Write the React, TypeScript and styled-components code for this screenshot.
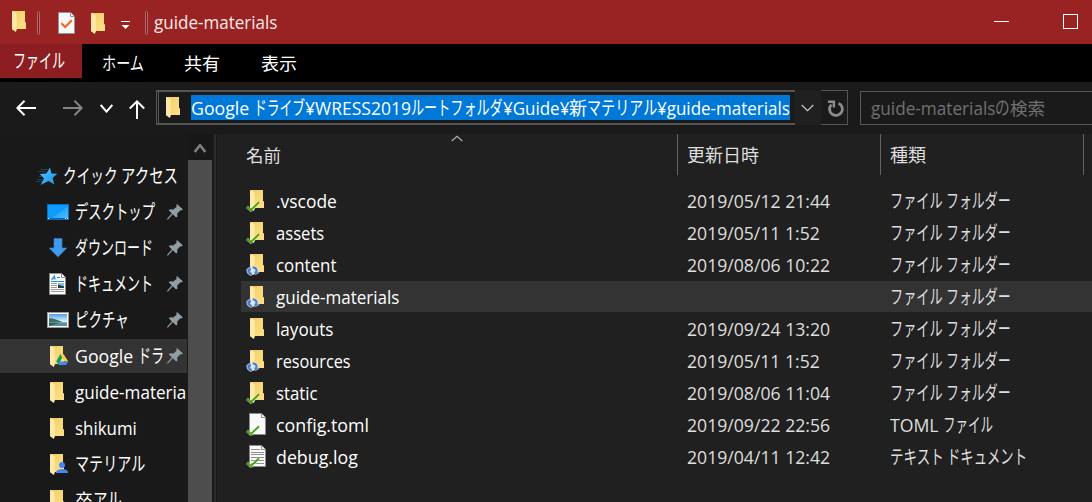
import React, { useLayoutEffect, useRef, useState } from "react";
import styled, { createGlobalStyle } from "styled-components";

const Global = createGlobalStyle`
  * { box-sizing: border-box; }
  html, body { margin: 0; background: #191919; overflow: hidden; }
  body { font-family: "Open Sans", "Noto Sans CJK JP", sans-serif; font-size: 18px; color: #fff; }
  svg { display: block; flex: none; }
`;

/* ---------- text fitted to a column width ---------- */
const RunBox = styled.span<{ $w: number }>`
  display: inline-block;
  width: ${(p) => p.$w}px;
  height: 26px;
  vertical-align: top;
  white-space: pre;
`;
const RunInner = styled.span<{ $size: number }>`
  display: inline-block;
  font-size: ${(p) => p.$size}px;
  line-height: 26px;
  transform-origin: 0 50%;
`;
const kana = /^[\u3041-\u30ff]/;
function Run({ w, size, children }: { w: number; size?: number; children: string }) {
  const ref = useRef<HTMLSpanElement>(null);
  const [k, setK] = useState(1);
  useLayoutEffect(() => {
    if (ref.current) setK(w / ref.current.offsetWidth);
  }, [w, children]);
  return (
    <RunBox $w={w}>
      <RunInner ref={ref} $size={size ?? (kana.test(children) ? 19.5 : 18)} style={{ transform: `scaleX(${k})` }}>{children}</RunInner>
    </RunBox>
  );
}

/* ---------- frame ---------- */
const Window = styled.div`
  width: 1092px; height: 502px; overflow: hidden;
  display: flex; flex-direction: column;
`;
const TitleBar = styled.header`
  height: 44px; background: #992222; flex: none;
  display: flex; align-items: flex-start; padding-left: 12px;
`;
const TitleItem = styled.div<{ $l?: number; $t: number }>`
  margin-left: ${(p) => p.$l ?? 0}px; padding-top: ${(p) => p.$t}px; color: #f6e9e9;
`;
const Spacer = styled.div` flex: 1; `;
const TabStrip = styled.nav`
  height: 38px; background: #000; flex: none; display: flex; align-items: flex-start;
`;
const FileTab = styled.div`
  width: 82px; height: 34px; background: #8c1e21; padding: 4px 0 0 13px;
`;
const Tab = styled.div<{ $l: number }>` margin-left: ${(p) => p.$l}px; padding-top: 6px; `;
const Toolbar = styled.div`
  height: 52px; background: #1a1a1a; flex: none; display: flex; align-items: flex-start;
`;
const NavIcon = styled.div<{ $l: number; $t: number }>`
  margin: ${(p) => p.$t}px 0 0 ${(p) => p.$l}px;
`;
const AddressFrame = styled.div`
  margin: 8px 0 0 11px; height: 35px; width: 639px; flex: none;
  border: solid #555; border-width: 2px 0 2px 1px; padding-left: 1px;
`;
const AddressInput = styled.div`
  height: 31px; border-left: 1px solid #555; display: flex; padding: 3px 0 0 8px;
`;
const Selected = styled.div`
  margin-left: 11px; height: 25px; background: #0078d7; width: 599px; white-space: nowrap;
`;
const DropButton = styled.div`
  width: 26px; height: 35px; margin-top: 8px; background: #202020; padding: 14px 0 0 6px; flex: none;
`;
const RefreshButton = styled.div`
  width: 27px; height: 35px; margin-top: 8px; border: 1px solid #555; border-left: 0; padding: 9px 0 0 6px; flex: none;
`;
const SearchBox = styled.div`
  margin: 9px -2px 0 12px; height: 34px; flex: 1; border: 1px solid #5a5a5a; padding: 3px 0 0 10px; color: #717171; white-space: nowrap;
`;

/* ---------- body ---------- */
const Body = styled.div` flex: 1; display: flex; min-height: 0; `;
const Sidebar = styled.aside`
  width: 188px; background: #191919; padding-top: 24px; flex: none; overflow: hidden;
`;
const SideRow = styled.div<{ $active?: boolean; $inset: number }>`
  height: 36px; width: 187px; display: flex; align-items: center; overflow: hidden;
  padding-left: ${(p) => p.$inset}px;
  background: ${(p) => (p.$active ? "#333" : "transparent")};
  background-clip: padding-box;
  border: solid transparent; border-width: 1px 0;
`;
const SideIcon = styled.div<{ $w: number }>`
  width: ${(p) => p.$w}px; height: 22px; flex: none;
`;
const SideLabel = styled.div` flex: 1; height: 26px; white-space: nowrap; min-width: 0; `;
const PinSlot = styled.div` width: 20px; flex: none; `;
const ScrollTrack = styled.div`
  width: 24px; flex: none; background: #171717; display: flex; flex-direction: column;
`;
const ScrollUp = styled.div` height: 26px; padding: 10px 0 0 6px; `;
const ScrollThumb = styled.div` flex: 1; background: #4d4d4d; `;
const Splitter = styled.div`
  width: 5px; flex: none; background: #2b2b2b; border-left: 2px solid #191919; border-right: 1px solid #191919;
`;
const Pane = styled.main` flex: 1; background: #202020; min-width: 0; `;
const Grid = styled.div`
  display: grid; grid-template-columns: 461px 203px 203px 1fr;
`;
const Header = styled(Grid)` height: 51px; color: #dedede; `;
const HeadCell = styled.div<{ $pad: number }>`
  height: 41px; display: flex; align-items: flex-start; padding: 8px 0 0 ${(p) => p.$pad}px;
  border-right: 1px solid #636363;
`;
const SortMark = styled.div` margin: -7px 0 0 170px; `;
const Row = styled(Grid)<{ $active?: boolean }>`
  height: 32px; margin-left: 24px; grid-template-columns: 446px 203px 1fr;
  border-bottom: 1px solid transparent; background-clip: padding-box;
  background-color: ${(p) => (p.$active ? "#333" : "transparent")};
  padding-top: 3px;
`;
const NameCell = styled.div` display: flex; padding-left: 5px; `;
const FileIcon = styled.div` width: 30px; height: 24px; flex: none; `;
const Dim = styled.div` color: #dedede; white-space: nowrap; `;

/* ---------- icons ---------- */
const FolderShape = () => (
  <>
    <path d="M.5 0H13V11.2h1V18H4z" fill="url(#fold)" />
    <path d="M0 0L1.2.2 4.8 2.6V18.6L3.8 21 0 18.2z" fill="#ffe9a8" />
  </>
);
const Defs = () => (
  <svg width="0" height="0" style={{ position: "absolute" }}>
    <defs>
      <linearGradient id="fold" x1="0" y1="0" x2="1" y2="1">
        <stop offset="0" stopColor="#efc864" /><stop offset=".45" stopColor="#f8d775" /><stop offset="1" stopColor="#ffe08a" />
      </linearGradient>
      <linearGradient id="sky" x1="0" y1="0" x2="0" y2="1">
        <stop offset="0" stopColor="#4f9fe8" /><stop offset=".6" stopColor="#dbeefa" />
      </linearGradient>
      <linearGradient id="desk" x1="0" y1="0" x2="1" y2="1">
        <stop offset="0" stopColor="#0d9bff" /><stop offset=".55" stopColor="#0d9bff" />
        <stop offset=".56" stopColor="#2ba9ff" /><stop offset="1" stopColor="#55bbff" />
      </linearGradient>
      <linearGradient id="star" x1="0" y1="0" x2="1" y2="1">
        <stop offset="0" stopColor="#5cc4ff" /><stop offset="1" stopColor="#1192e8" />
      </linearGradient>
    </defs>
  </svg>
);
const Folder = () => <svg width="14" height="21" viewBox="0 0 14 21"><FolderShape /></svg>;

type Badge = "check" | "sync" | "none";
type Base = "folder" | "page" | "log";
function FileGlyph({ base, badge }: { base: Base; badge: Badge }) {
  return (
    <svg width="20" height="24" viewBox="0 0 20 24">
      {base === "folder" && <g transform="translate(4 2)"><FolderShape /></g>}
      {base !== "folder" && (
        <>
          <path d="M3.5 1.5H15.5L19.5 5.5V22.5H3.5z" fill="#f7f9fa" stroke="#8b8b8b" />
          <path d="M15.5 1.5V5.5H19.5" fill="#fff" stroke="#8b8b8b" />
        </>
      )}
      {base === "log" && <path d="M5 5.5H14M5 8.5H18M5 10.5H18M5 13.5H18M5 16.5H18M5 19.5H18" stroke="#8f8f8f" />}
      {badge === "check" && (
        <>
          <path d="M1 18.8L5 22.4 13 14.5" fill="none" stroke="#fff" strokeWidth="3.4" opacity=".4" />
          <path d="M.8 18.5L5 22 13 14.3" fill="none" stroke="#4ca314" strokeWidth="2" />
        </>
      )}
      {badge === "sync" && (
        <>
          <g fill="#cfdcf5" stroke="#cfdcf5" strokeWidth="1.6" strokeLinejoin="round" opacity=".8">
            <path d="M1 17.6L4.6 15.2 5.2 18.6 4.2 19 6.4 22.2 4.6 23 1.8 20.8z" />
            <path d="M6.6 14.8L9.4 15.4 11.4 17.4 12.4 20.6 9.4 22 7.8 19.8 9 19.2 8.6 17.2z" />
          </g>
          <path d="M2.8 17.4Q2.2 20.8 5.8 22.4" fill="none" stroke="#3d7de8" strokeWidth="2" />
          <path d="M.8 18L4.6 15.4 5 18.8z" fill="#3d7de8" />
          <path d="M6.8 15.2Q11 15.8 10.4 19.8" fill="none" stroke="#3d7de8" strokeWidth="2" />
          <path d="M8 19.4L12.6 20.2 9.4 22.2z" fill="#3d7de8" />
        </>
      )}
    </svg>
  );
}
const TaskDoc = () => (
  <svg width="18" height="23" viewBox="0 0 18 23">
    <path d="M.5 .5H12.5L16.5 4.5V21.5H.5z" fill="#f8f8f8" stroke="#8f9496" />
    <path d="M12.5 .5V4.5H16.5" fill="#fff" stroke="#8f9496" />
    <path d="M3.3 11.3L7.2 15 13.8 8.2" fill="none" stroke="#f0641e" strokeWidth="2" />
  </svg>
);
const Grip = () => (
  <svg width="4" height="24" viewBox="0 0 4 24"><rect x=".5" y=".5" width="2" height="23" rx="1" fill="#7b1b1b" stroke="#b46a6a" /></svg>
);
const Pin = () => (
  <svg width="16" height="16" viewBox="0 0 16 16">
    <path d="M10 0L16 5.6 14.2 6.6 13.4 6.2 10.2 9.6 10.4 12.6 9.2 13.6 5.8 10.3 1 15.6 0 15.4 .3 14.4 4.8 9.5 1.8 6.2 3 5.2 6.4 5.6 9.8 2.6 9.2 1.4z" fill="#919ca3" />
  </svg>
);
const Star = () => (
  <svg width="23" height="19" viewBox="0 0 23 19">
    <path d="M14 .6L15.4 6.4 21.4 6.8 16.6 11 18.4 17.4 12.4 14 4.6 18 8 11.4 3.8 7 10.4 6.6z" fill="url(#star)" />
    <path d="M4 2.5H12M2 4.5H10M3 9.5H7M1 12.5H7M0 14.5H6" stroke="#1d8fd6" strokeWidth="1" opacity=".35" />
  </svg>
);
const Desktop = () => (
  <svg width="22" height="16" viewBox="0 0 22 16">
    <rect x=".5" y=".5" width="21" height="15" fill="url(#desk)" stroke="#0a6fc0" />
    <path d="M1 14.5H21" stroke="#0b64ae" /><path d="M1 14.5H2M18 14.5H19M20 14.5H21" stroke="#fff" />
  </svg>
);
const Download = () => (
  <svg width="18" height="20" viewBox="0 0 18 20"><path d="M5 .5H13V10H17.8L9 19 .2 10H5z" fill="#3e9aeb" stroke="#2f86d4" strokeWidth=".6" /></svg>
);
const Document = () => (
  <svg width="17" height="22" viewBox="0 0 17 22">
    <path d="M.5 .5H12.5L16.5 4.5V21.5H.5z" fill="#fafafa" stroke="#8e8e8e" />
    <path d="M12.5 .5V4.5H16.5" fill="#fff" stroke="#8e8e8e" />
    <path d="M2.5 7L5.4 2.8 6.2 6.5M3.4 5.6H6" fill="none" stroke="#2a8bd5" strokeWidth="1.1" />
    <path d="M8 4.5H11M2 8.5H15" stroke="#2a8bd5" />
    <path d="M2 10.5H8M2 12.5H8M2 14.5H8M2 16.5H15M2 18.5H15" stroke="#9b9b9b" />
    <rect x="9" y="10" width="6" height="5" fill="#8fc0e6" /><path d="M9 11.5L15 13.5V15H9z" fill="#1c4152" />
  </svg>
);
const Picture = () => (
  <svg width="22" height="16" viewBox="0 0 22 16">
    <rect x=".5" y=".5" width="21" height="15" fill="#fff" stroke="#9b9b9b" />
    <rect x="2" y="2" width="18" height="12" fill="url(#sky)" />
    <path d="M2 6.2C6 6 11 8 16 10.4L2 10.8z" fill="#3e7065" /><path d="M2 10.4H20V14H2z" fill="#5b8fa3" /><path d="M2 11H12L2 14z" fill="#315b55" />
  </svg>
);
const DriveFolder = () => (
  <svg width="19" height="22" viewBox="0 0 19 22">
    <FolderShape />
    <path d="M10.2 8L13.6 8.2 18.3 15.5H14.2z" fill="#ffcf44" />
    <path d="M10.2 8L12.3 11.6 8.6 18.7 6.2 15.5z" fill="#11a15d" />
    <path d="M10.3 15.5H18.3L16.2 19H8.4z" fill="#4285f4" />
  </svg>
);
const SharedFolder = () => (
  <svg width="19" height="22" viewBox="0 0 19 22">
    <FolderShape />
    <circle cx="12" cy="11" r="3" fill="#4285f4" /><path d="M6 19V17.5Q7.5 15 12 15Q16.5 15 18 17.5V19z" fill="#4285f4" />
  </svg>
);
const Chevron = ({ w = 13, h = 8, color = "#fff", sw = 2, up = false }) => (
  <svg width={w} height={h} viewBox={`0 0 ${w} ${h}`}>
    <path d={up ? `M.7 ${h - 1}L${w / 2} 1.2 ${w - 0.7} ${h - 1}` : `M.7 1L${w / 2} ${h - 1.4} ${w - 0.7} 1`} fill="none" stroke={color} strokeWidth={sw} />
  </svg>
);
const Arrow = ({ color, flip }: { color: string; flip?: boolean }) => (
  <svg width="20" height="16" viewBox="0 0 20 16">
    <path d={flip ? "M0 8H18.5M11.5 .8L18.6 8 11.5 15.2" : "M20 8H1.5M8.5 .8L1.4 8 8.5 15.2"} fill="none" stroke={color} strokeWidth="2" />
  </svg>
);

/* ---------- data ---------- */
const files: { name: string; w: number; base: Base; badge: Badge; date?: string; dw?: number; kind: "folder" | "toml" | "text" }[] = [
  { name: ".vscode", w: 61, base: "folder", badge: "check", date: "2019/05/12 21:44", dw: 143, kind: "folder" },
  { name: "assets", w: 48, base: "folder", badge: "check", date: "2019/05/11 1:52", dw: 133, kind: "folder" },
  { name: "content", w: 60, base: "folder", badge: "sync", date: "2019/08/06 10:22", dw: 143, kind: "folder" },
  { name: "guide-materials", w: 123, base: "folder", badge: "sync", kind: "folder" },
  { name: "layouts", w: 57, base: "folder", badge: "none", date: "2019/09/24 13:20", dw: 143, kind: "folder" },
  { name: "resources", w: 75, base: "folder", badge: "sync", date: "2019/05/11 1:52", dw: 133, kind: "folder" },
  { name: "static", w: 42, base: "folder", badge: "check", date: "2019/08/06 11:04", dw: 143, kind: "folder" },
  { name: "config.toml", w: 93, base: "page", badge: "check", date: "2019/09/22 22:56", dw: 143, kind: "toml" },
  { name: "debug.log", w: 82, base: "log", badge: "check", date: "2019/04/11 12:42", dw: 143, kind: "text" },
];
function Kind({ kind }: { kind: string }) {
  if (kind === "toml") return <Dim><Run w={53}>TOML </Run><Run w={50}>ファイル</Run></Dim>;
  if (kind === "text") return <Dim><Run w={57}>テキスト </Run><Run w={80}>ドキュメント</Run></Dim>;
  return <Dim><Run w={56}>ファイル </Run><Run w={65}>フォルダー</Run></Dim>;
}

export default function App() {
  return (
    <Window>
      <Global />
      <Defs />
      <TitleBar>
        <TitleItem $t={11}><Folder /></TitleItem>
        <TitleItem $l={11} $t={11}><Grip /></TitleItem>
        <TitleItem $l={17} $t={12}><TaskDoc /></TitleItem>
        <TitleItem $l={15} $t={13}><Folder /></TitleItem>
        <TitleItem $l={16} $t={21}>
          <svg width="9" height="9" viewBox="0 0 9 9"><path d="M0 .5H9" stroke="#fff" /><path d="M.5 4H8.5L4.5 8z" fill="#fff" /></svg>
        </TitleItem>
        <TitleItem $l={15} $t={11}><Grip /></TitleItem>
        <TitleItem $l={5} $t={9}><Run w={123}>guide-materials</Run></TitleItem>
        <Spacer />
        <TitleItem $t={21}><svg width="15" height="1"><rect width="15" height="1" fill="#fff" /></svg></TitleItem>
        <TitleItem $l={54} $t={14}><svg width="29" height="15"><rect x=".5" y=".5" width="14" height="14" fill="none" stroke="#fff" /></svg></TitleItem>
      </TitleBar>
      <TabStrip>
        <FileTab><Run w={52}>ファイル</Run></FileTab>
        <Tab $l={20}><Run w={42} size={18.5}>ホーム</Run></Tab>
        <Tab $l={40}><Run w={36} size={17.5}>共有</Run></Tab>
        <Tab $l={41}><Run w={36} size={17.5}>表示</Run></Tab>
      </TabStrip>
      <Toolbar>
        <NavIcon $l={16} $t={18}><Arrow color="#fff" /></NavIcon>
        <NavIcon $l={27} $t={18}><Arrow color="#858585" flip /></NavIcon>
        <NavIcon $l={17} $t={22}><Chevron w={13} h={9} /></NavIcon>
        <NavIcon $l={16} $t={18}>
          <svg width="16" height="19" viewBox="0 0 16 19"><path d="M8 19V1.5M.8 8.5L8 1.4 15.2 8.5" fill="none" stroke="#fff" strokeWidth="2" /></svg>
        </NavIcon>
        <AddressFrame>
          <AddressInput>
            <NavIcon $l={-1} $t={2}><Folder /></NavIcon>
            <Selected>
              <Run w={63}>Google </Run><Run w={51}>ドライブ</Run><Run w={106}>¥WRESS2019</Run><Run w={92}>ルートフォルダ</Run><Run w={66}>¥Guide¥</Run><Run w={18}>新</Run><Run w={70}>マテリアル</Run><Run w={133}>¥guide-materials</Run>
            </Selected>
          </AddressInput>
        </AddressFrame>
        <DropButton><Chevron w={13} h={8} sw={1.2} color="#c8c8c8" /></DropButton>
        <RefreshButton>
          <svg width="18" height="18" viewBox="0 0 18 18">
            <path d="M4.4 4.6A6.4 6.4 0 1 0 11.6 3.2" fill="none" stroke="#8c8c8c" strokeWidth="2.8" />
            <path d="M1 1.8H6.9V7.6" fill="none" stroke="#8c8c8c" strokeWidth="2.4" />
          </svg>
        </RefreshButton>
        <SearchBox><Run w={124}>guide-materials</Run><Run w={15}>の</Run><Run w={35} size={17.5}>検索</Run></SearchBox>
      </Toolbar>
      <Body>
        <Sidebar>
          <SideRow $inset={36}><SideIcon $w={27}><NavIcon $l={0} $t={2}><Star /></NavIcon></SideIcon><SideLabel><Run w={58}>クイック </Run><Run w={57}>アクセス</Run></SideLabel></SideRow>
          <SideRow $inset={47}><SideIcon $w={28}><NavIcon $l={0} $t={3}><Desktop /></NavIcon></SideIcon><SideLabel><Run w={80}>デスクトップ</Run></SideLabel><PinSlot><Pin /></PinSlot></SideRow>
          <SideRow $inset={49}><SideIcon $w={26}><NavIcon $l={0} $t={1}><Download /></NavIcon></SideIcon><SideLabel><Run w={78}>ダウンロード</Run></SideLabel><PinSlot><Pin /></PinSlot></SideRow>
          <SideRow $inset={49}><SideIcon $w={26}><Document /></SideIcon><SideLabel><Run w={78}>ドキュメント</Run></SideLabel><PinSlot><Pin /></PinSlot></SideRow>
          <SideRow $inset={47}><SideIcon $w={28}><NavIcon $l={0} $t={3}><Picture /></NavIcon></SideIcon><SideLabel><Run w={54}>ピクチャ</Run></SideLabel><PinSlot><Pin /></PinSlot></SideRow>
          <SideRow $inset={50} $active><SideIcon $w={25}><NavIcon $l={0} $t={1}><DriveFolder /></NavIcon></SideIcon><SideLabel><Run w={63}>Google </Run><Run w={26}>ドラ</Run></SideLabel><PinSlot><Pin /></PinSlot></SideRow>
          <SideRow $inset={50}><SideIcon $w={25}><NavIcon $l={0} $t={1}><Folder /></NavIcon></SideIcon><SideLabel><Run w={111}>guide-materia</Run></SideLabel></SideRow>
          <SideRow $inset={50}><SideIcon $w={25}><NavIcon $l={0} $t={1}><Folder /></NavIcon></SideIcon><SideLabel><Run w={62}>shikumi</Run></SideLabel></SideRow>
          <SideRow $inset={50}><SideIcon $w={25}><NavIcon $l={0} $t={1}><SharedFolder /></NavIcon></SideIcon><SideLabel><Run w={70}>マテリアル</Run></SideLabel></SideRow>
          <SideRow $inset={50}><SideIcon $w={25}><NavIcon $l={0} $t={1}><Folder /></NavIcon></SideIcon><SideLabel><Run w={18}>卒</Run><Run w={29}>アル</Run></SideLabel></SideRow>
        </Sidebar>
        <ScrollTrack>
          <ScrollUp><Chevron w={12} h={9} up color="#808080" sw={2.6} /></ScrollUp>
          <ScrollThumb />
        </ScrollTrack>
        <Splitter />
        <Pane>
          <Header>
            <HeadCell $pad={29}><Run w={35} size={17.5}>名前</Run><SortMark><Chevron w={12} h={7} up color="#b0b0b0" sw={1.2} /></SortMark></HeadCell>
            <HeadCell $pad={9}><Run w={72}>更新日時</Run></HeadCell>
            <HeadCell $pad={9}><Run w={36}>種類</Run></HeadCell>
          </Header>
          {files.map((f, i) => (
            <Row key={i} $active={i === 3}>
              <NameCell>
                <FileIcon><FileGlyph base={f.base} badge={f.badge} /></FileIcon>
                <Run w={f.w}>{f.name}</Run>
              </NameCell>
              <Dim>{f.date && <Run w={f.dw!}>{f.date}</Run>}</Dim>
              <Kind kind={f.kind} />
            </Row>
          ))}
        </Pane>
      </Body>
    </Window>
  );
}
